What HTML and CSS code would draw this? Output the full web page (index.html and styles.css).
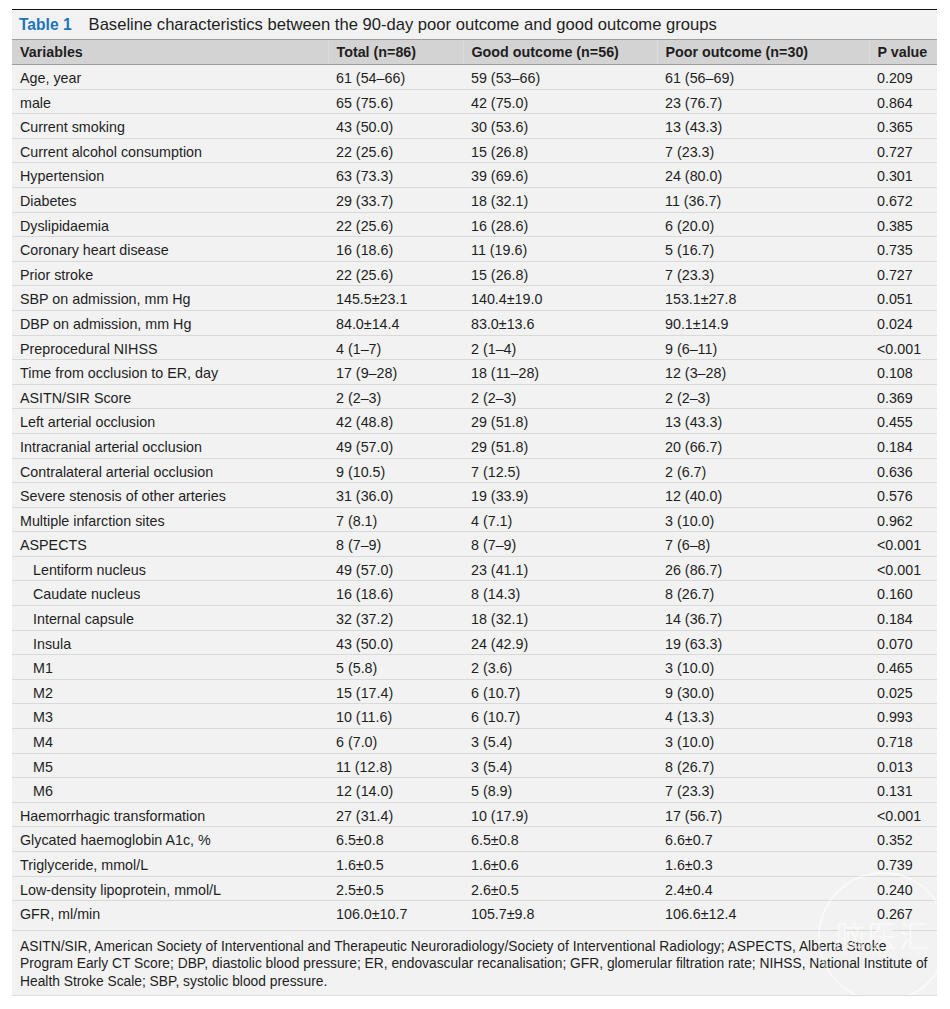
FILE: index.html
```html
<!DOCTYPE html>
<html>
<head>
<meta charset="utf-8">
<link rel="stylesheet" href="styles.css">
</head>
<body>
<div class="panel">
  <div class="caption"><span class="label">Table 1</span><span class="title">Baseline characteristics between the 90-day poor outcome and good outcome groups</span></div>
  <table class="data">
    <colgroup>
      <col class="c1"><col class="c2"><col class="c3"><col class="c4"><col class="c5">
    </colgroup>
    <thead>
      <tr><th>Variables</th><th>Total (n=86)</th><th>Good outcome (n=56)</th><th>Poor outcome (n=30)</th><th>P value</th></tr>
    </thead>
    <tbody>
      <tr><td>Age, year</td><td>61 (54–66)</td><td>59 (53–66)</td><td>61 (56–69)</td><td>0.209</td></tr>
      <tr><td>male</td><td>65 (75.6)</td><td>42 (75.0)</td><td>23 (76.7)</td><td>0.864</td></tr>
      <tr><td>Current smoking</td><td>43 (50.0)</td><td>30 (53.6)</td><td>13 (43.3)</td><td>0.365</td></tr>
      <tr><td>Current alcohol consumption</td><td>22 (25.6)</td><td>15 (26.8)</td><td>7 (23.3)</td><td>0.727</td></tr>
      <tr><td>Hypertension</td><td>63 (73.3)</td><td>39 (69.6)</td><td>24 (80.0)</td><td>0.301</td></tr>
      <tr><td>Diabetes</td><td>29 (33.7)</td><td>18 (32.1)</td><td>11 (36.7)</td><td>0.672</td></tr>
      <tr><td>Dyslipidaemia</td><td>22 (25.6)</td><td>16 (28.6)</td><td>6 (20.0)</td><td>0.385</td></tr>
      <tr><td>Coronary heart disease</td><td>16 (18.6)</td><td>11 (19.6)</td><td>5 (16.7)</td><td>0.735</td></tr>
      <tr><td>Prior stroke</td><td>22 (25.6)</td><td>15 (26.8)</td><td>7 (23.3)</td><td>0.727</td></tr>
      <tr><td>SBP on admission, mm Hg</td><td>145.5±23.1</td><td>140.4±19.0</td><td>153.1±27.8</td><td>0.051</td></tr>
      <tr><td>DBP on admission, mm Hg</td><td>84.0±14.4</td><td>83.0±13.6</td><td>90.1±14.9</td><td>0.024</td></tr>
      <tr><td>Preprocedural NIHSS</td><td>4 (1–7)</td><td>2 (1–4)</td><td>9 (6–11)</td><td>&lt;0.001</td></tr>
      <tr><td>Time from occlusion to ER, day</td><td>17 (9–28)</td><td>18 (11–28)</td><td>12 (3–28)</td><td>0.108</td></tr>
      <tr><td>ASITN/SIR Score</td><td>2 (2–3)</td><td>2 (2–3)</td><td>2 (2–3)</td><td>0.369</td></tr>
      <tr><td>Left arterial occlusion</td><td>42 (48.8)</td><td>29 (51.8)</td><td>13 (43.3)</td><td>0.455</td></tr>
      <tr><td>Intracranial arterial occlusion</td><td>49 (57.0)</td><td>29 (51.8)</td><td>20 (66.7)</td><td>0.184</td></tr>
      <tr><td>Contralateral arterial occlusion</td><td>9 (10.5)</td><td>7 (12.5)</td><td>2 (6.7)</td><td>0.636</td></tr>
      <tr><td>Severe stenosis of other arteries</td><td>31 (36.0)</td><td>19 (33.9)</td><td>12 (40.0)</td><td>0.576</td></tr>
      <tr><td>Multiple infarction sites</td><td>7 (8.1)</td><td>4 (7.1)</td><td>3 (10.0)</td><td>0.962</td></tr>
      <tr><td>ASPECTS</td><td>8 (7–9)</td><td>8 (7–9)</td><td>7 (6–8)</td><td>&lt;0.001</td></tr>
      <tr><td class="sub">Lentiform nucleus</td><td>49 (57.0)</td><td>23 (41.1)</td><td>26 (86.7)</td><td>&lt;0.001</td></tr>
      <tr><td class="sub">Caudate nucleus</td><td>16 (18.6)</td><td>8 (14.3)</td><td>8 (26.7)</td><td>0.160</td></tr>
      <tr><td class="sub">Internal capsule</td><td>32 (37.2)</td><td>18 (32.1)</td><td>14 (36.7)</td><td>0.184</td></tr>
      <tr><td class="sub">Insula</td><td>43 (50.0)</td><td>24 (42.9)</td><td>19 (63.3)</td><td>0.070</td></tr>
      <tr><td class="sub">M1</td><td>5 (5.8)</td><td>2 (3.6)</td><td>3 (10.0)</td><td>0.465</td></tr>
      <tr><td class="sub">M2</td><td>15 (17.4)</td><td>6 (10.7)</td><td>9 (30.0)</td><td>0.025</td></tr>
      <tr><td class="sub">M3</td><td>10 (11.6)</td><td>6 (10.7)</td><td>4 (13.3)</td><td>0.993</td></tr>
      <tr><td class="sub">M4</td><td>6 (7.0)</td><td>3 (5.4)</td><td>3 (10.0)</td><td>0.718</td></tr>
      <tr><td class="sub">M5</td><td>11 (12.8)</td><td>3 (5.4)</td><td>8 (26.7)</td><td>0.013</td></tr>
      <tr><td class="sub">M6</td><td>12 (14.0)</td><td>5 (8.9)</td><td>7 (23.3)</td><td>0.131</td></tr>
      <tr><td>Haemorrhagic transformation</td><td>27 (31.4)</td><td>10 (17.9)</td><td>17 (56.7)</td><td>&lt;0.001</td></tr>
      <tr><td>Glycated haemoglobin A1c, %</td><td>6.5±0.8</td><td>6.5±0.8</td><td>6.6±0.7</td><td>0.352</td></tr>
      <tr><td>Triglyceride, mmol/L</td><td>1.6±0.5</td><td>1.6±0.6</td><td>1.6±0.3</td><td>0.739</td></tr>
      <tr><td>Low-density lipoprotein, mmol/L</td><td>2.5±0.5</td><td>2.6±0.5</td><td>2.4±0.4</td><td>0.240</td></tr>
      <tr class="last"><td>GFR, ml/min</td><td>106.0±10.7</td><td>105.7±9.8</td><td>106.6±12.4</td><td>0.267</td></tr>
    </tbody>
  </table>
  <p class="note">ASITN/SIR, American Society of Interventional and Therapeutic Neuroradiology/Society of Interventional Radiology; ASPECTS, Alberta Stroke Program Early CT Score; DBP, diastolic blood pressure; ER, endovascular recanalisation; GFR, glomerular filtration rate; NIHSS, National Institute of Health Stroke Scale; SBP, systolic blood pressure.</p>
  <div class="watermark"><span class="wm-text">脑医汇</span><span class="wm-sub">NAOYIHUI.COM</span></div>
</div>
</body>
</html>
```
FILE: styles.css
```css
html, body {
  margin: 0;
  padding: 0;
  background: #ffffff;
}
body {
  padding: 9px 13px 0 12px;
  font-family: "Liberation Sans", Arial, "Noto Sans CJK SC", sans-serif;
  color: #1e1e1e;
}
.panel {
  position: relative;
  overflow: hidden;
  background: #f2f2f2;
  border-top: 1px solid #111111;
  border-bottom: 1px solid #dcdcdc;
}
.caption {
  height: 29px;
  line-height: 29px;
  padding-left: 7px;
  font-size: 16.6px;
  white-space: nowrap;
}
.label {
  color: #1c74bb;
  font-weight: bold;
  font-size: 15.6px;
  margin-right: 17px;
}
.data {
  width: 100%;
  border-collapse: collapse;
  table-layout: fixed;
  font-size: 14.3px;
}
.c1 { width: 316px; }
.c2 { width: 135px; }
.c3 { width: 194px; }
.c4 { width: 212px; }
.c5 { width: 68px; }
.data th {
  background: #d3d3d3;
  font-weight: bold;
  text-align: left;
  padding: 1px 0 0 8px;
  height: 23px;
  line-height: 23px;
  border-top: 1px solid #9c9c9c;
  border-bottom: 1px solid #9c9c9c;
  border-left: 1px solid #dcdcdc;
}
.data th:first-child {
  border-left: none;
}
.data td {
  padding: 4px 0 0 8px;
  height: 19.6px;
  line-height: 19.6px;
  border-bottom: 1px solid #d9d9d9;
  white-space: nowrap;
}
.data tr.last td {
  padding-bottom: 5px;
}
.data td.sub {
  padding-left: 21px;
}
.note {
  margin: 0;
  padding: 7px 4px 5px 8px;
  font-size: 13.8px;
  line-height: 17.5px;
}
.watermark {
  position: absolute;
  left: 806px;
  top: 862px;
  width: 126px;
  height: 126px;
  border-radius: 50%;
  border: 2px solid rgba(255, 255, 255, 0.5);
  display: flex;
  flex-direction: column;
  align-items: center;
  justify-content: center;
  pointer-events: none;
}
.wm-text {
  color: rgba(255, 255, 255, 0.7);
  font-size: 30px;
  line-height: 34px;
  letter-spacing: 2px;
  font-family: "Noto Sans CJK SC", sans-serif;
  font-weight: 300;
}
.wm-sub {
  color: rgba(255, 255, 255, 0.45);
  font-size: 6px;
  letter-spacing: 3px;
}
```
